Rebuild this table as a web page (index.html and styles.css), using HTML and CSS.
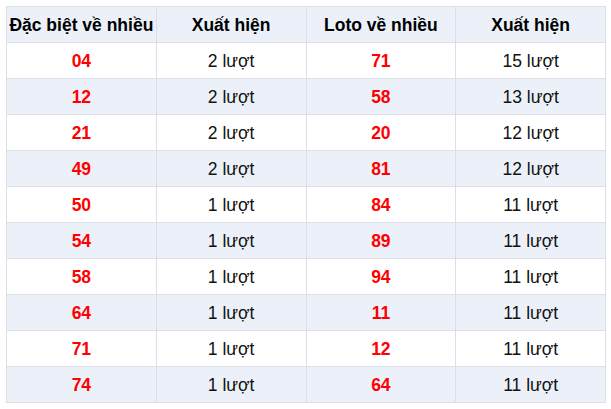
FILE: index.html
```html
<!DOCTYPE html>
<html lang="vi">
<head>
<meta charset="utf-8">
<link rel="stylesheet" href="styles.css">
</head>
<body>
<table class="stats">
  <thead>
    <tr><th>Đặc biệt về nhiều</th><th>Xuất hiện</th><th>Loto về nhiều</th><th>Xuất hiện</th></tr>
  </thead>
  <tbody>
    <tr><td class="num">04</td><td>2 lượt</td><td class="num">71</td><td>15 lượt</td></tr>
    <tr><td class="num">12</td><td>2 lượt</td><td class="num">58</td><td>13 lượt</td></tr>
    <tr><td class="num">21</td><td>2 lượt</td><td class="num">20</td><td>12 lượt</td></tr>
    <tr><td class="num">49</td><td>2 lượt</td><td class="num">81</td><td>12 lượt</td></tr>
    <tr><td class="num">50</td><td>1 lượt</td><td class="num">84</td><td>11 lượt</td></tr>
    <tr><td class="num">54</td><td>1 lượt</td><td class="num">89</td><td>11 lượt</td></tr>
    <tr><td class="num">58</td><td>1 lượt</td><td class="num">94</td><td>11 lượt</td></tr>
    <tr><td class="num">64</td><td>1 lượt</td><td class="num">11</td><td>11 lượt</td></tr>
    <tr><td class="num">71</td><td>1 lượt</td><td class="num">12</td><td>11 lượt</td></tr>
    <tr><td class="num">74</td><td>1 lượt</td><td class="num">64</td><td>11 lượt</td></tr>
  </tbody>
</table>
</body>
</html>
```

FILE: styles.css
```css
html, body {
  margin: 0;
  padding: 0;
  background: #ffffff;
}
body {
  padding: 6px 6px 0 6px;
  font-family: "Liberation Sans", Arial, sans-serif;
  color: #111111;
}
.stats {
  border-collapse: collapse;
  width: 600px;
  table-layout: fixed;
}
.stats tr {
  height: 36px;
}
.stats th,
.stats td {
  border: 1px solid #dcdfe5;
  padding: 0;
  text-align: center;
  vertical-align: middle;
  font-size: 17.5px;
  line-height: 20px;
  white-space: nowrap;
}
.stats th {
  font-weight: bold;
  background: #ecf1f9;
  color: #000000;
}
.stats tbody tr:nth-child(even) td {
  background: #ecf1f9;
}
.stats td.num {
  color: #ff0000;
  font-weight: bold;
}
```
